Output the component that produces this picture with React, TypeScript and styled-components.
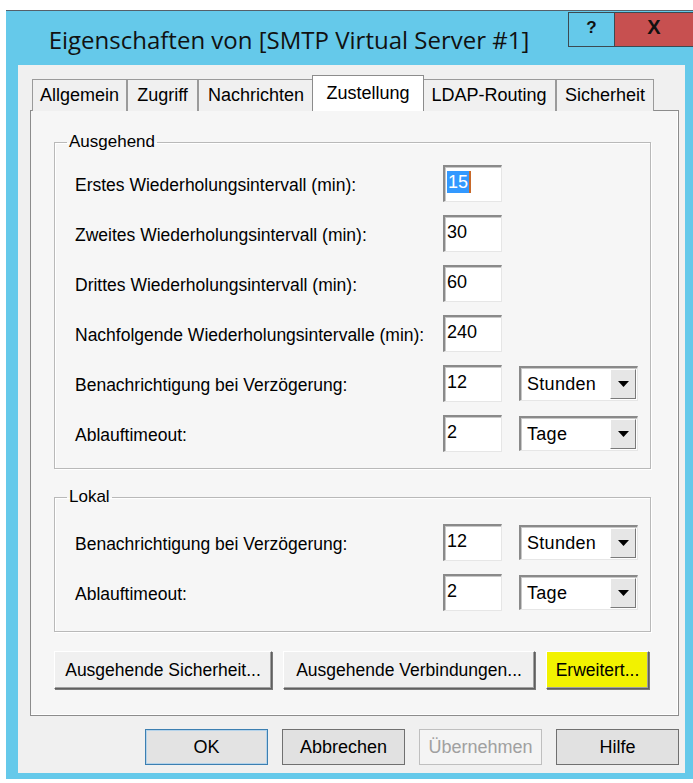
import React from "react"
import styled, { createGlobalStyle, css } from "styled-components"

const GlobalStyle = createGlobalStyle`
  html, body {
    margin: 0;
    padding: 0;
    background: #ffffff;
  }
  body {
    width: 693px;
    height: 783px;
    overflow: hidden;
    font-family: "Liberation Sans", Arial, sans-serif;
    color: #000;
  }
`

const Window = styled.div`
  margin: 10px 0 0 6px;
  width: 687px;
  height: 769px;
  box-sizing: border-box;
  background: #65c9ea;
  border-top: 1px solid #55606a;
  padding: 0 8px 6px 12px;
  display: flex;
  flex-direction: column;
`

const TitleBar = styled.div`
  height: 54px;
  margin: 0 -8px 0 -12px;
  display: flex;
  align-items: center;
`

const Title = styled.h1`
  flex: 1;
  margin: 0;
  text-align: center;
  font-family: "Open Sans", "Noto Sans", sans-serif;
  font-weight: 400;
  font-size: 24px;
  color: #111;
  padding: 2px 0 0 4px;
`

const CaptionButton = styled.div<{ $close?: boolean }>`
  align-self: flex-start;
  margin-top: 1px;
  height: 35px;
  width: ${(p) => (p.$close ? "78px" : "47px")};
  box-sizing: border-box;
  border: 1px solid #3c4a52;
  border-left-width: ${(p) => (p.$close ? "0" : "1px")};
  border-right-width: ${(p) => (p.$close ? "0" : "1px")};
  background: ${(p) => (p.$close ? "#c75050" : "#65c9ea")};
  display: flex;
  align-items: center;
  justify-content: center;
  font-family: "Liberation Sans", Arial, sans-serif;
  font-weight: 700;
  font-size: ${(p) => (p.$close ? "20px" : "17px")};
  color: #111;
  padding-bottom: 4px;
`

const Body = styled.div`
  flex: 1;
  background: #f0f0f0;
  padding: 10px 6px 8px 12px;
  display: flex;
  flex-direction: column;
`

const TabStrip = styled.div`
  display: flex;
  align-items: flex-end;
  height: 36px;
  margin: 0 0 -1px 2px;
  position: relative;
  z-index: 1;
`

const Tab = styled.div<{ $width: number; $active?: boolean }>`
  width: ${(p) => p.$width}px;
  height: 32px;
  box-sizing: border-box;
  border: 1px solid #9a9a9a;
  border-bottom: none;
  background: #f0f0f0;
  font-size: 18px;
  line-height: 30px;
  text-align: center;
  white-space: nowrap;

  ${(p) =>
    p.$active &&
    css`
      width: ${p.$width + 4}px;
      height: 36px;
      margin: 0 -2px;
      padding-top: 2px;
      background: #ffffff;
      border-color: #8c8c8c;
      position: relative;
      z-index: 2;
    `}
`

const TabPanel = styled.div`
  height: 606px;
  box-sizing: border-box;
  border: 1px solid #8c8c8c;
  background: #f6f6f6;
  box-shadow: inset -1px -1px 0 #ffffff;
  padding: 21px 27px 0 23px;
  display: flex;
  flex-direction: column;
  gap: 18px;
`

const GroupBox = styled.fieldset`
  margin: 0;
  padding: 0;
  border: 1px solid #b9b9b9;
  box-shadow: inset 1px 1px 0 #ffffff, 1px 1px 0 #ffffff;
  min-width: 0;
`

const GroupTitle = styled.legend`
  margin-left: 12px;
  padding: 0 2px;
  font-size: 17px;
  line-height: 20px;
`

const GroupBody = styled.div<{ $top: number; $bottom: number }>`
  padding: ${(p) => p.$top}px 0 ${(p) => p.$bottom}px 20px;
  display: grid;
  grid-template-columns: 351px 59px 119px;
  column-gap: 17px;
  row-gap: 13px;
  align-items: center;
`

const FieldLabel = styled.div`
  grid-column: 1;
  font-size: 17.5px;
  white-space: nowrap;
  padding-top: 4px;
`

const sunken = css`
  box-sizing: border-box;
  background: #ffffff;
  border-style: solid;
  border-width: 2px 1px 1px 2px;
  border-color: #8a8a8a #e6e6e6 #e6e6e6 #8a8a8a;
  box-shadow: inset 1px 1px 0 #c8c8c8;
`

const TextBox = styled.div`
  ${sunken}
  grid-column: 2;
  height: 37px;
  padding: 4px 0 0 2px;
  font-size: 18px;
  line-height: 22px;
`

const Selected = styled.span`
  background: #3399ff;
  color: #ffffff;
  border-right: 2px solid #c8692a;
  padding: 1px;
`

const ComboBox = styled.div`
  ${sunken}
  grid-column: 3;
  height: 35px;
  display: flex;
  align-items: stretch;
  font-size: 18px;
`

const ComboValue = styled.div`
  flex: 1;
  padding: 0 0 0 6px;
  display: flex;
  align-items: center;
  letter-spacing: 0.3px;
`

const ComboArrow = styled.div`
  width: 26px;
  margin: 1px 1px 1px 0;
  box-sizing: border-box;
  background: #e6e6e6;
  border: 1px solid;
  border-color: #ffffff #7a7a7a #7a7a7a #ffffff;
  display: flex;
  align-items: center;
  justify-content: center;
`

const PanelButtons = styled.div`
  display: flex;
  gap: 11px;
  margin-top: 1px;
`

const ClassicButton = styled.div<{ $width: number; $marked?: boolean }>`
  width: ${(p) => p.$width}px;
  height: 38px;
  box-sizing: border-box;
  background: ${(p) => (p.$marked ? "#f2f200" : "#f0f0f0")};
  border: 1px solid;
  border-color: #ffffff #5f5f5f #5f5f5f #ffffff;
  box-shadow: inset -1px -1px 0 #a0a0a0, 1px 1px 0 #7a7a7a;
  display: flex;
  align-items: center;
  justify-content: center;
  font-size: 17.5px;
  white-space: nowrap;
`

const DialogButtons = styled.div`
  display: flex;
  justify-content: flex-end;
  gap: 14px;
  margin-top: 13px;
`

const DialogButton = styled.div<{ $variant?: "default" | "disabled" }>`
  width: 123px;
  height: 36px;
  box-sizing: border-box;
  border: 1px solid #707070;
  background: #e1e1e1;
  display: flex;
  align-items: center;
  justify-content: center;
  font-size: 18px;

  ${(p) =>
    p.$variant === "default" &&
    css`
      border-color: #3c7fb1;
      box-shadow: inset 0 0 0 1px #b5d3ea;
      background: #e3e3e3;
    `}

  ${(p) =>
    p.$variant === "disabled" &&
    css`
      border-color: #bfbfbf;
      background: #f4f4f4;
      color: #a0a0a0;
    `}
`

const Arrow = () => (
  <svg width="11" height="6" viewBox="0 0 11 6">
    <path d="M0 0h11L5.5 6z" fill="#000" />
  </svg>
)

type Row = { label: string; value: string; unit?: string; selected?: boolean }

const outgoing: Row[] = [
  { label: "Erstes Wiederholungsintervall (min):", value: "15", selected: true },
  { label: "Zweites Wiederholungsintervall (min):", value: "30" },
  { label: "Drittes Wiederholungsintervall (min):", value: "60" },
  { label: "Nachfolgende Wiederholungsintervalle (min):", value: "240" },
  { label: "Benachrichtigung bei Verzögerung:", value: "12", unit: "Stunden" },
  { label: "Ablauftimeout:", value: "2", unit: "Tage" },
]

const local: Row[] = [
  { label: "Benachrichtigung bei Verzögerung:", value: "12", unit: "Stunden" },
  { label: "Ablauftimeout:", value: "2", unit: "Tage" },
]

const tabs = [
  { name: "Allgemein", width: 95 },
  { name: "Zugriff", width: 71 },
  { name: "Nachrichten", width: 116 },
  { name: "Zustellung", width: 108 },
  { name: "LDAP-Routing", width: 134 },
  { name: "Sicherheit", width: 98 },
]

function Fields({ rows }: { rows: Row[] }) {
  return (
    <>
      {rows.map((r) => (
        <React.Fragment key={r.label}>
          <FieldLabel>{r.label}</FieldLabel>
          <TextBox>{r.selected ? <Selected>{r.value}</Selected> : r.value}</TextBox>
          {r.unit && (
            <ComboBox>
              <ComboValue>{r.unit}</ComboValue>
              <ComboArrow>
                <Arrow />
              </ComboArrow>
            </ComboBox>
          )}
        </React.Fragment>
      ))}
    </>
  )
}

export default function App() {
  return (
    <>
      <GlobalStyle />
      <Window>
        <TitleBar>
          <Title>Eigenschaften von [SMTP Virtual Server #1]</Title>
          <CaptionButton>?</CaptionButton>
          <CaptionButton $close>X</CaptionButton>
        </TitleBar>
        <Body>
          <TabStrip>
            {tabs.map((t) => (
              <Tab key={t.name} $width={t.width} $active={t.name === "Zustellung"}>
                {t.name}
              </Tab>
            ))}
          </TabStrip>
          <TabPanel>
            <GroupBox>
              <GroupTitle>Ausgehend</GroupTitle>
              <GroupBody $top={13} $bottom={16}>
                <Fields rows={outgoing} />
              </GroupBody>
            </GroupBox>
            <GroupBox>
              <GroupTitle>Lokal</GroupTitle>
              <GroupBody $top={17} $bottom={20}>
                <Fields rows={local} />
              </GroupBody>
            </GroupBox>
            <PanelButtons>
              <ClassicButton $width={218}>Ausgehende Sicherheit...</ClassicButton>
              <ClassicButton $width={252}>Ausgehende Verbindungen...</ClassicButton>
              <ClassicButton $width={103} $marked>
                Erweitert...
              </ClassicButton>
            </PanelButtons>
          </TabPanel>
          <DialogButtons>
            <DialogButton $variant="default">OK</DialogButton>
            <DialogButton>Abbrechen</DialogButton>
            <DialogButton $variant="disabled">Übernehmen</DialogButton>
            <DialogButton>Hilfe</DialogButton>
          </DialogButtons>
        </Body>
      </Window>
    </>
  )
}
